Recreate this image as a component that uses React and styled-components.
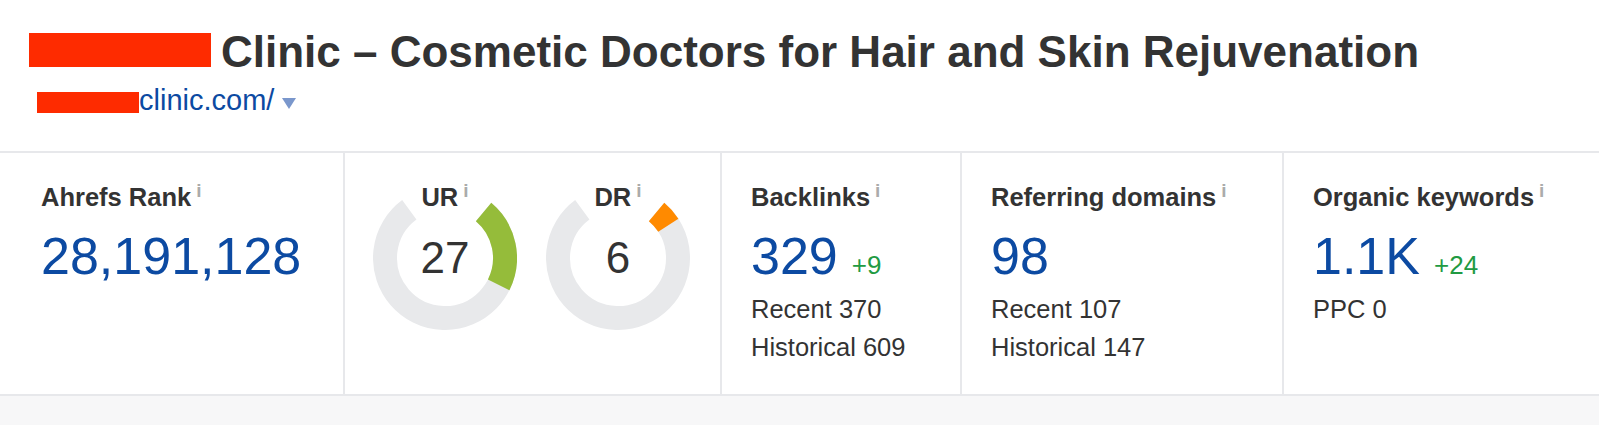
import React from 'react';
import styled, { createGlobalStyle } from 'styled-components';

const GlobalStyle = createGlobalStyle`
  html, body { margin: 0; padding: 0; }
  body {
    background: #f7f7f8;
    font-family: "Liberation Sans", Arial, Helvetica, sans-serif;
    color: #333;
  }
`;

const Header = styled.header`
  background: #fff;
  padding: 29.5px 0 36.5px 29px;
`;

const Title = styled.h1`
  display: flex;
  align-items: flex-start;
  margin: 0;
  font-size: 44px;
  line-height: 44px;
  font-weight: 700;
  color: #333;
  white-space: nowrap;
`;

// red blocks hiding the brand name
const Redacted = styled.span`
  display: inline-block;
  flex: none;
  width: ${p => p.$w}px;
  height: ${p => p.$h}px;
  margin-top: ${p => p.$top || 0}px;
  margin-right: ${p => p.$gap || 0}px;
  background: #fe2b00;
`;

const UrlRow = styled.div`
  display: flex;
  align-items: flex-start;
  margin: 12px 0 0 8px;
  font-size: 29px;
  line-height: 29px;
  color: #0c4aa2;
`;

const Caret = styled.span`
  width: 0;
  height: 0;
  margin: 12.5px 0 0 7.5px;
  border-left: 7px solid transparent;
  border-right: 7px solid transparent;
  border-top: 11px solid #7a97cc;
`;

const Stats = styled.section`
  display: grid;
  grid-template-columns: 343px 377px 240px 322px 1fr;
  background: #fff;
  border-top: 2px solid #e7e8eb;
  border-bottom: 2px solid #e7e8eb;
`;

const Cell = styled.div`
  padding: 29px 0 28px ${p => p.$pad || 29}px;
  border-left: ${p => (p.$first ? 'none' : '2px solid #e7e8eb')};
`;

const GaugeCell = styled.div`
  display: flex;
  justify-content: center;
  gap: 29px;
  padding: 33px 2px 0 0;
  border-left: 2px solid #e7e8eb;
`;

const Label = styled.div`
  font-size: 25.5px;
  line-height: 30px;
  font-weight: 700;
  color: #333;
  white-space: nowrap;
`;

const Info = styled.span`
  margin-left: 5px;
  font-size: 19px;
  line-height: 0;
  font-weight: 700;
  color: #ababab;
  vertical-align: 9px;
`;

const ValueRow = styled.div`
  display: flex;
  align-items: baseline;
  gap: 14px;
  margin-top: 18px;
`;

const Value = styled.span`
  font-size: 52px;
  line-height: 52px;
  color: #0c4aa2;
`;

const Delta = styled.span`
  font-size: 26px;
  color: #219a42;
`;

const Details = styled.div`
  margin-top: 8px;
  font-size: 25.5px;
  line-height: 38px;
  color: #333;
`;

const GaugeBox = styled.div`
  position: relative;
  width: 144px;
  height: 144px;
`;

const GaugeLabel = styled(Label)`
  position: absolute;
  top: -4px;
  left: 0;
  right: 0;
  text-align: center;
`;

const GaugeValue = styled.div`
  position: absolute;
  inset: 0;
  display: flex;
  align-items: center;
  justify-content: center;
  font-size: 44px;
  line-height: 44px;
  color: #333;
`;

const START = 40;
const SWEEP = 283.5;

const polar = (deg) => {
  const a = ((deg - 90) * Math.PI) / 180;
  return [72 + 60 * Math.cos(a), 72 + 60 * Math.sin(a)];
};

const arc = (from, to) => {
  const [x1, y1] = polar(from);
  const [x2, y2] = polar(to);
  const large = to - from > 180 ? 1 : 0;
  return `M ${x1} ${y1} A 60 60 0 ${large} 1 ${x2} ${y2}`;
};

const Gauge = ({ name, value, color }) => (
  <GaugeBox>
    <svg width="144" height="144" viewBox="0 0 144 144">
      <path d={arc(START, START + SWEEP)} fill="none" stroke="#e8e9eb" strokeWidth="24" />
      <path d={arc(START, START + (SWEEP * value) / 100)} fill="none" stroke={color} strokeWidth="24" />
    </svg>
    <GaugeLabel>
      {name}
      <Info>i</Info>
    </GaugeLabel>
    <GaugeValue>{value}</GaugeValue>
  </GaugeBox>
);

const Metric = ({ label, value, delta, lines = [], first, pad }) => (
  <Cell $first={first} $pad={pad}>
    <Label>
      {label}
      <Info>i</Info>
    </Label>
    <ValueRow>
      <Value>{value}</Value>
      {delta && <Delta>{delta}</Delta>}
    </ValueRow>
    {lines.length > 0 && (
      <Details>
        {lines.map(l => (
          <div key={l}>{l}</div>
        ))}
      </Details>
    )}
  </Cell>
);

export default function App() {
  return (
    <>
      <GlobalStyle />
      <Header>
        <Title>
          <Redacted $w={182} $h={34} $top={3.5} $gap={10} />
          Clinic – Cosmetic Doctors for Hair and Skin Rejuvenation
        </Title>
        <UrlRow>
          <Redacted $w={102} $h={21} $top={6.5} />
          <span>clinic.com/</span>
          <Caret />
        </UrlRow>
      </Header>
      <Stats>
        <Metric first pad={41} label="Ahrefs Rank" value="28,191,128" />
        <GaugeCell>
          <Gauge name="UR" value={27} color="#95bc3a" />
          <Gauge name="DR" value={6} color="#ff8a00" />
        </GaugeCell>
        <Metric label="Backlinks" value="329" delta="+9" lines={['Recent 370', 'Historical 609']} />
        <Metric label="Referring domains" value="98" lines={['Recent 107', 'Historical 147']} />
        <Metric label="Organic keywords" value="1.1K" delta="+24" lines={['PPC 0']} />
      </Stats>
    </>
  );
}
